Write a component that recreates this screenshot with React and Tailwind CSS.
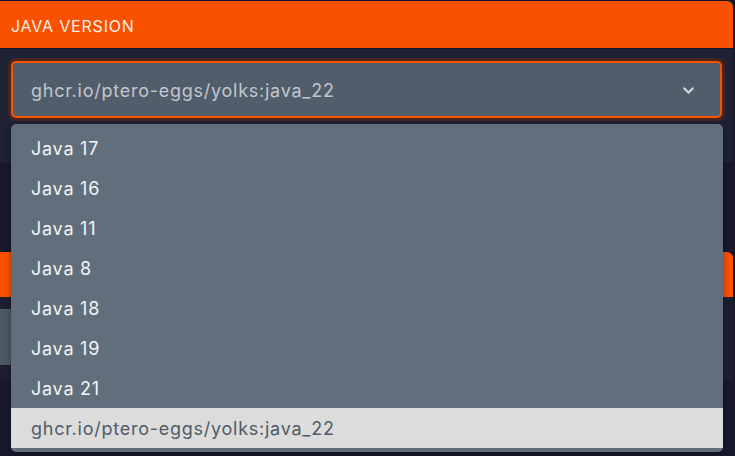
import { ChevronDown } from 'lucide-react';

const options = [
  'Java 17',
  'Java 16',
  'Java 11',
  'Java 8',
  'Java 18',
  'Java 19',
  'Java 21',
  'ghcr.io/ptero-eggs/yolks:java_22',
];

export default function App() {
  const selected = 'ghcr.io/ptero-eggs/yolks:java_22';

  return (
    <div
      className="relative h-[456px] w-[735px] overflow-hidden bg-[#17182a]"
      style={{ fontFamily: 'Inter, "Noto Sans", sans-serif' }}
    >
      {/* variable card */}
      <div className="mt-px mr-[2px] rounded-tr-md bg-[#1f2134]">
        <div className="flex h-[48px] items-center rounded-tr-md border-b border-[#141522] bg-[#f95100] px-[11px] pt-[2px] text-[16px] tracking-[0.8px] text-[#fbeee6]">
          JAVA VERSION
        </div>
        <div className="h-[113px] px-[11px] pt-[12px]">
          <div className="flex h-[57px] items-center justify-between rounded-[5px] border-2 border-[#f95100] bg-[#505d6a] pt-[2px] pr-[23px] pl-[18px] text-[18px] tracking-[0.75px] text-[#c3c7cc] shadow-[0_0_0_3px_rgba(120,40,10,0.45)]">
            <span>{selected}</span>
            <ChevronDown className="h-[17px] w-[17px] text-[#cdd1d6]" strokeWidth={3} />
          </div>
        </div>
      </div>

      {/* next card, mostly covered */}
      <div className="mt-[90px] mr-[2px] rounded-tr-md bg-[#1d1e30]">
        <div className="h-[45px] rounded-tr-md bg-[#f95100]" />
        <div className="pt-[12px] pb-4">
          <div className="h-[56px] w-[600px] bg-[#4c5864]" />
        </div>
      </div>

      {/* open dropdown */}
      <ul className="absolute top-[124px] left-[11px] w-[712px] rounded-[5px] bg-[#616e7b] py-1 shadow-[0_2px_6px_rgba(0,0,0,0.35)]">
        {options.map((opt) => (
          <li
            key={opt}
            className={`flex h-10 items-center pl-5 text-[18px] tracking-[0.75px] ${
              opt === selected ? 'bg-[#dcdcdc] text-[#505b67]' : 'text-[#f3f5f7]'
            }`}
          >
            {opt}
          </li>
        ))}
      </ul>
    </div>
  );
}
